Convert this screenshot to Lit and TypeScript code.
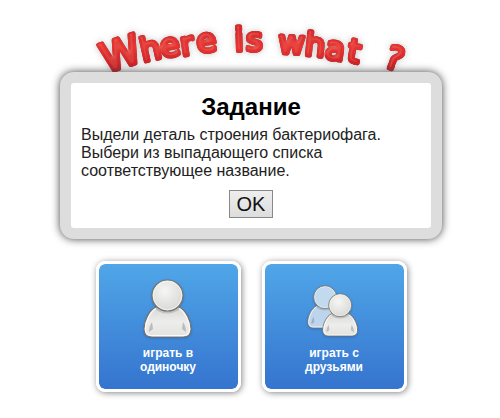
import { LitElement, html, css, svg } from "lit";
import { customElement, property } from "lit/decorators.js";

const person = (body: string, head: string) => svg`
  <path
    d="M13 28C6 31 1 42 1 50C1 56 4 58 9 58H40C45 58 48 56 48 50C48 42 43 31 36 28Z"
    fill=${body} stroke="#77736a" stroke-width="1.2"/>
  <path
    d="M13 29.500C7 33 2.300 43 2.300 50C2.300 55 5 56.700 9 56.700H40C44 56.700 46.700 55 46.700 50C46.700 43 42 33 36 29.500"
    fill="none" stroke="#fff" stroke-opacity=".8" stroke-width="1.2"/>
  <path d="M6 53C6 49 7 46 9 43L10 50ZM43 53C43 49 42 46 40 43L39 50Z" fill="#77797c" fill-opacity=".4"/>
  <path d="M13 31Q24 38 36 31L36 28H13Z" fill="#68686a" fill-opacity=".25"/>
  <circle cx="24.500" cy="16.500" r="15.500" fill=${head} stroke="#77736a" stroke-width="1.2"/>
  <circle cx="24.500" cy="16.500" r="14.300" fill="none" stroke="#fff" stroke-opacity=".6"/>
`;

const gradients = svg`
  <defs>
    <radialGradient id="head" cx=".42" cy=".35" r=".7">
      <stop offset="0" stop-color="#f6f6f4"/>
      <stop offset="1" stop-color="#d6d6d3"/>
    </radialGradient>
    <linearGradient id="body" x1="0" y1="0" x2="0" y2="1">
      <stop offset="0" stop-color="#d8d8d6"/>
      <stop offset=".5" stop-color="#ededeb"/>
      <stop offset="1" stop-color="#e2e2e0"/>
    </linearGradient>
  </defs>
`;

@customElement("game-logo")
class GameLogo extends LitElement {
  static styles = css`
    :host {
      display: block;
      height: 72px;
    }
    svg {
      display: block;
      width: 320px;
      height: 72px;
      margin: 0 auto;
      overflow: visible;
    }
    .letters {
      font-family: "DejaVu Sans", sans-serif;
      font-size: 32px;
      fill: url(#red);
      stroke: url(#red);
      stroke-width: 4px;
      stroke-linejoin: round;
      stroke-linecap: round;
    }
    .capital {
      font-size: 40px;
    }
  `;
  render() {
    return html`
      <svg viewBox="91 0 320 72" role="img" aria-label="Where is what ?">
        <defs>
          <linearGradient id="red" gradientUnits="userSpaceOnUse" x1="0" y1="22" x2="0" y2="72">
            <stop offset="0" stop-color="#d0282c" />
            <stop offset=".5" stop-color="#e63534" />
            <stop offset="1" stop-color="#c41d24" />
          </linearGradient>
          <filter id="relief" x="-5%" y="-20%" width="110%" height="140%">
            <feGaussianBlur in="SourceAlpha" stdDeviation=".7" result="edge" />
            <feFlood flood-color="#4c1518" flood-opacity=".9" />
            <feComposite in2="edge" operator="in" result="outline" />
            <feGaussianBlur in="SourceAlpha" stdDeviation="3" result="soft" />
            <feFlood flood-color="#555" flood-opacity=".35" />
            <feComposite in2="soft" operator="in" result="shade" />
            <feGaussianBlur in="SourceAlpha" stdDeviation="1.4" result="bump" />
            <feSpecularLighting in="bump" surfaceScale="3" specularConstant=".25" specularExponent="14" lighting-color="#ff8c7c" result="light">
              <feDistantLight azimuth="235" elevation="50" />
            </feSpecularLighting>
            <feComposite in="light" in2="SourceAlpha" operator="in" result="gloss" />
            <feMerge>
              <feMergeNode in="shade" />
              <feMergeNode in="outline" />
              <feMergeNode in="SourceGraphic" />
              <feMergeNode in="gloss" />
            </feMerge>
          </filter>
        </defs>
        <g class="letters" filter="url(#relief)">
          <text class="capital" x="106" y="73" rotate="-18">W</text>
          <text x="143 162 182 198" y="62 58 56 53" rotate="-13 -11 -9 -8">here</text>
          <text x="235 246" y="51 51" rotate="-2 0">is</text>
          <text x="278 304 324 346" y="53 55 58 61" rotate="3 6 9 11">what</text>
          <text x="383" y="66" rotate="20">?</text>
        </g>
      </svg>
    `;
  }
}

@customElement("task-dialog")
class TaskDialog extends LitElement {
  static styles = css`
    :host {
      display: block;
      position: relative;
      box-sizing: border-box;
      width: calc(100% - 32px);
      max-width: 382px;
      border: 11px solid #ddd;
      border-radius: 14px;
      background: #fff;
      box-shadow: 0 0 8px #444;
      font-family: "Liberation Sans", Arial, sans-serif;
      color: #222;
    }
    .content {
      display: flex;
      flex-direction: column;
      align-items: center;
      padding: 10px;
    }
    h1 {
      margin: 0 0 5px;
      font-size: 24px;
      line-height: 28px;
      color: #000;
    }
    p {
      align-self: stretch;
      margin: 0 0 10px;
      max-width: 320px;
      font-size: 16px;
      line-height: 18px;
    }
    button {
      width: 44px;
      height: 28px;
      padding: 0;
      border: 1px solid #888;
      border-radius: 0;
      background: linear-gradient(#eee, #ddd);
      font-family: inherit;
      font-size: 20px;
      color: #111;
    }
  `;
  render() {
    return html`
      <section class="content" role="dialog" aria-labelledby="title">
        <h1 id="title">Задание</h1>
        <p>
          Выдели деталь строения бактериофага.<br />
          Выбери из выпадающего списка<br />
          соответствующее название.
        </p>
        <button type="button">OK</button>
      </section>
    `;
  }
}

@customElement("mode-button")
class ModeButton extends LitElement {
  @property() first = "";
  @property() second = "";
  @property({ type: Boolean }) friends = false;

  static styles = css`
    :host {
      display: block;
      flex: 0 1 145px;
    }
    button {
      display: flex;
      flex-direction: column;
      align-items: center;
      width: 100%;
      padding: 14px 8px 15px;
      border: 3px solid #fff;
      border-radius: 9px;
      background: linear-gradient(#50a6e8, #3574cf) padding-box;
      box-shadow: 1px 1px 6px #888;
      font-family: "Liberation Sans", Arial, sans-serif;
      font-size: 12px;
      font-weight: bold;
      line-height: 14px;
      color: #fff;
    }
    svg {
      width: 64px;
      height: 64px;
      margin-bottom: 4px;
      filter: drop-shadow(0 1px 1px #2458a080);
    }
  `;
  render() {
    const icon = this.friends
      ? svg`
          <g transform="translate(5 7) scale(.74)">${person("#bdd5ec", "#c2daee")}</g>
          <g transform="translate(20 15) scale(.74)">${person("url(#body)", "url(#head)")}</g>`
      : svg`<g transform="translate(7 1)">${person("url(#body)", "url(#head)")}</g>`;
    return html`
      <button type="button">
        <svg viewBox="0 0 64 64" aria-hidden="true">${gradients}${icon}</svg>
        <span>${this.first}<br />${this.second}</span>
      </button>
    `;
  }
}

@customElement("app-root")
class AppRoot extends LitElement {
  static styles = css`
    :host {
      display: block;
      background: #fff;
    }
    .page {
      display: flex;
      flex-direction: column;
      align-items: center;
      padding: 0 0 24px 2px;
    }
    game-logo {
      width: 100%;
    }
    .modes {
      display: flex;
      justify-content: center;
      gap: 21px;
      width: 100%;
      margin-top: 22px;
    }
  `;
  render() {
    return html`
      <main class="page">
        <game-logo></game-logo>
        <task-dialog></task-dialog>
        <nav class="modes">
          <mode-button first="играть в" second="одиночку"></mode-button>
          <mode-button first="играть с" second="друзьями" friends></mode-button>
        </nav>
      </main>
    `;
  }
}
